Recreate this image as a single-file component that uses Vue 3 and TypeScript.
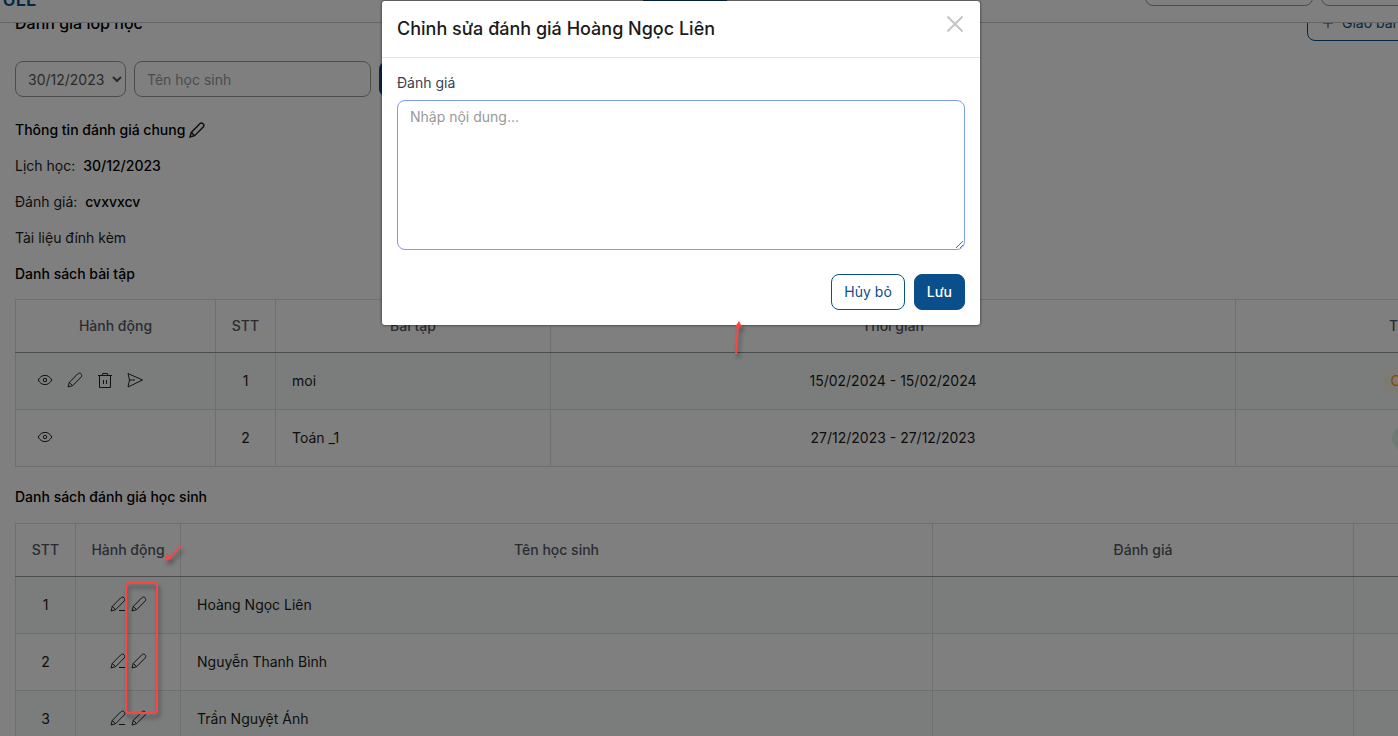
<script setup lang="ts">
import { ref } from 'vue'

interface Homework {
  id: number
  name: string
  time: string
  status: string
  tone: 'warn' | 'done'
  editable: boolean
}

interface Student {
  id: number
  name: string
}

const homeworks: Homework[] = [
  { id: 1, name: 'moi', time: '15/02/2024 - 15/02/2024', status: 'Chưa nộp', tone: 'warn', editable: true },
  { id: 2, name: 'Toán _1', time: '27/12/2023 - 27/12/2023', status: 'Đã nộp', tone: 'done', editable: false },
]

const students: Student[] = [
  { id: 1, name: 'Hoàng Ngọc Liên' },
  { id: 2, name: 'Nguyễn Thanh Bình' },
  { id: 3, name: 'Trần Nguyệt Ánh' },
]

const date = ref('30/12/2023')
const keyword = ref('')
const review = ref('')
</script>

<template>
  <div class="app">
    <svg class="defs" aria-hidden="true">
      <symbol id="i-eye" viewBox="0 0 16 16">
        <path d="M1.200 8C2.800 5 5.200 3.400 8 3.400S13.200 5 14.800 8C13.200 11 10.800 12.600 8 12.600S2.800 11 1.200 8Z" />
        <circle cx="8" cy="8" r="1.700" />
      </symbol>
      <symbol id="i-pencil" viewBox="0 0 16 16">
        <path d="M1 15L2.300 10.400L10.800 1.800C11.600 1 13 .8 14 1.700C15 2.600 15 4.100 14.200 5L5.600 13.700Z" />
        <path d="M2.300 10.400L5.600 13.700" />
      </symbol>
      <symbol id="i-edit" viewBox="0 0 16 16">
        <path d="M1 15L2.300 10.400L10.800 1.800C11.600 1 13 .8 14 1.700C15 2.600 15 4.100 14.200 5L5.600 13.700Z" />
        <path d="M2.300 10.400L5.600 13.700M9 14.500H15" />
      </symbol>
      <symbol id="i-trash" viewBox="0 0 16 16">
        <path d="M1 3.500H15M5 3.500L5.500 1.500H10.500L11 3.500M2.500 3.500V15.500H13.500V3.500M6.500 8V12M9.500 8V12" />
      </symbol>
      <symbol id="i-send" viewBox="0 0 16 16">
        <path d="M1 1.500L15.500 8L1 15L2.500 8ZM2.500 8H8" />
      </symbol>
    </svg>

    <header class="topbar">
      <strong class="brand">FULL</strong>
      <span class="nav-active"></span>
      <span class="top-field"></span>
      <span class="top-field"></span>
    </header>

    <main class="page">
      <div class="page-head">
        <h1>Đánh giá lớp học</h1>
        <button type="button" class="btn outline assign">
          <svg viewBox="0 0 10 10"><path d="M5 0V10M0 5H10" /></svg>Giao bài tập
        </button>
      </div>

      <form class="filters" @submit.prevent>
        <select v-model="date" aria-label="Lịch học">
          <option>30/12/2023</option>
        </select>
        <input v-model="keyword" type="text" placeholder="Tên học sinh" aria-label="Tên học sinh" />
        <button type="submit" class="btn primary search" aria-label="Tìm kiếm"></button>
      </form>

      <section class="info">
        <h2>
          Thông tin đánh giá chung
          <button type="button" class="icon-btn" aria-label="Sửa"><svg class="bold"><use href="#i-pencil" /></svg></button>
        </h2>
        <p>Lịch học: <b>30/12/2023</b></p>
        <p>Đánh giá: <b>cvxvxcv</b></p>
        <p>Tài liệu đính kèm</p>
        <h2>Danh sách bài tập</h2>
      </section>

      <table class="homework">
        <colgroup>
          <col class="c-actions" /><col class="c-no" /><col class="c-name" /><col class="c-time" /><col />
        </colgroup>
        <thead>
          <tr><th>Hành động</th><th>STT</th><th>Bài tập</th><th>Thời gian</th><th>Trạng thái</th></tr>
        </thead>
        <tbody>
          <tr v-for="h in homeworks" :key="h.id">
            <td>
              <div class="actions wide">
                <button type="button" class="icon-btn" aria-label="Xem"><svg><use href="#i-eye" /></svg></button>
                <template v-if="h.editable">
                  <button type="button" class="icon-btn" aria-label="Sửa"><svg><use href="#i-pencil" /></svg></button>
                  <button type="button" class="icon-btn" aria-label="Xóa"><svg><use href="#i-trash" /></svg></button>
                  <button type="button" class="icon-btn" aria-label="Gửi"><svg><use href="#i-send" /></svg></button>
                </template>
              </div>
            </td>
            <td class="center">{{ h.id }}</td>
            <td>{{ h.name }}</td>
            <td class="center">{{ h.time }}</td>
            <td class="center"><span class="pill" :class="h.tone">{{ h.status }}</span></td>
          </tr>
        </tbody>
      </table>

      <h2 class="list-title">Danh sách đánh giá học sinh</h2>

      <table class="students">
        <colgroup>
          <col class="c-no" /><col class="c-edit" /><col class="c-student" /><col class="c-review" /><col />
        </colgroup>
        <thead>
          <tr><th>STT</th><th>Hành động</th><th>Tên học sinh</th><th>Đánh giá</th><th></th></tr>
        </thead>
        <tbody>
          <tr v-for="s in students" :key="s.id">
            <td class="center">{{ s.id }}</td>
            <td>
              <div class="actions">
                <button type="button" class="icon-btn" aria-label="Đánh giá"><svg><use href="#i-edit" /></svg></button>
                <button type="button" class="icon-btn" aria-label="Sửa"><svg><use href="#i-pencil" /></svg></button>
              </div>
            </td>
            <td>{{ s.name }}</td>
            <td></td>
            <td></td>
          </tr>
        </tbody>
      </table>
    </main>

    <div class="backdrop">
      <form class="modal" role="dialog" aria-labelledby="modal-title" @submit.prevent>
        <div class="modal-head">
          <h3 id="modal-title">Chỉnh sửa đánh giá Hoàng Ngọc Liên</h3>
          <button type="button" class="close" aria-label="Đóng">
            <svg viewBox="0 0 16 16"><path d="M.5 .5L15.500 15.500M15.500 .5L.5 15.500" /></svg>
          </button>
        </div>
        <div class="modal-body">
          <label for="review">Đánh giá</label>
          <textarea id="review" v-model="review" placeholder="Nhập nội dung..."></textarea>
          <div class="modal-actions">
            <button type="button" class="btn outline">Hủy bỏ</button>
            <button type="submit" class="btn primary">Lưu</button>
          </div>
        </div>
      </form>
    </div>

    <div class="mark frame"></div>
    <svg class="mark arrow-down" viewBox="0 0 20 20">
      <path d="M18 3L7 14" /><path class="tip" d="M2 18L4 10.500L9 15.500Z" />
    </svg>
    <svg class="mark arrow-up" viewBox="0 0 12 36">
      <path d="M4 34L6 6" /><path class="tip" d="M7 1L10 7H3Z" />
    </svg>
  </div>
</template>

<style>
body {
  overflow: hidden;
}
</style>

<style scoped>
.app {
  position: relative;
  height: 100vh;
  overflow: hidden;
  background: #fff;
  color: #1b1b1b;
  font: 400 14px/20px Inter, "Liberation Sans", sans-serif;
}
.app * {
  box-sizing: border-box;
}
.defs {
  position: absolute;
  width: 0;
  height: 0;
}
button,
input,
select,
textarea {
  font: inherit;
}
h1, h2, h3, p {
  margin: 0;
}
svg {
  fill: none;
  stroke: currentColor;
  stroke-width: 1;
}

.topbar {
  display: flex;
  align-items: flex-end;
  justify-content: flex-end;
  gap: 8px;
  height: 23px;
  min-width: 1625px;
  overflow: hidden;
  padding: 0 136px 16px 0;
  border-bottom: 1px solid #c6c8cc;
}
.brand {
  margin: 0 auto 0 -8px;
  color: #0a4e8b;
  font-size: 18px;
  font-weight: 600;
  line-height: 12px;
}
.nav-active {
  width: 84px;
  height: 6px;
  margin: 0 410px 0 0;
  align-self: flex-start;
  border-top: 1px solid #0a4e8b;
}
.top-field {
  flex: none;
  width: 168px;
  height: 36px;
  border: 1px solid #999;
  border-radius: 8px;
}

.page {
  min-width: 1625px;
  overflow: hidden;
  padding: 0 15px;
}
.page-head {
  display: flex;
  align-items: flex-end;
  justify-content: space-between;
  height: 38px;
  margin-top: -20px;
}
h1 {
  padding-bottom: 6px;
  font-size: 16px;
  font-weight: 500;
  line-height: 24px;
}
.assign {
  display: flex;
  align-items: center;
  gap: 9px;
  width: 303px;
}
.assign svg {
  width: 10px;
  height: 10px;
  margin-left: 3px;
}
.filters {
  display: flex;
  gap: 8px;
  margin-top: 20px;
}
.filters select,
.filters input {
  height: 36px;
  border: 1px solid #999;
  border-radius: 8px;
  background: #fff;
  color: #555;
}
.filters select {
  width: 111px;
  padding: 0 0 0 8px;
}
.filters input {
  width: 237px;
  padding: 0 12px;
}
.search {
  width: 96px;
}
input::placeholder,
textarea::placeholder {
  color: #999;
  opacity: 1;
}
.info {
  display: flex;
  flex-direction: column;
  gap: 16px;
  margin: 23px 0 15px;
}
h2 {
  display: flex;
  align-items: center;
  gap: 4px;
  font-size: 14px;
  font-weight: 500;
  line-height: 20px;
}
b {
  margin-left: 4px;
  font-weight: 500;
}
h1, h2, b {
  color: #000;
}
.list-title {
  margin: 20px 0 16px;
}

.btn {
  height: 36px;
  padding: 0 12px;
  border: 1px solid #0a4e8b;
  border-radius: 8px;
}
.outline {
  background: #fff;
  color: #0a4e8b;
}
.primary {
  background: #0a4e8b;
  color: #fff;
  font-weight: 500;
}
.icon-btn {
  display: flex;
  padding: 0;
  border: 0;
  background: none;
  color: #222;
}
.icon-btn svg {
  width: 16px;
  height: 16px;
}
.icon-btn .bold {
  stroke-width: 1.500;
}

table {
  width: 100%;
  table-layout: fixed;
  border-collapse: collapse;
}
th,
td {
  height: 57px;
  padding: 0 16px;
  border: 1px solid #dcdee0;
  text-align: left;
}
th {
  height: 53px;
  padding: 0 12px;
  border-bottom-color: #96989c;
  color: #555966;
  font-weight: 500;
  text-align: center;
  white-space: nowrap;
}
tbody tr:nth-child(odd) {
  background: #f6fbf9;
}
.center {
  text-align: center;
}
.c-actions { width: 200px; }
.c-no { width: 60px; }
.c-name { width: 275px; }
.c-time { width: 685px; }
.c-edit { width: 105px; }
.c-student { width: 752px; }
.c-review { width: 421px; }
.actions {
  display: flex;
  justify-content: center;
  gap: 5px;
  padding-bottom: 2px;
}
.wide {
  justify-content: flex-start;
  gap: 14px;
  padding-left: 5px;
}
.pill {
  display: inline-block;
  padding: 3px 7px;
  border-radius: 13px;
}
.warn {
  background: #fdf4e8;
  color: #f59e0b;
}
.done {
  background: #e2f5ea;
  color: #16a34a;
}

.backdrop {
  position: absolute;
  inset: 0;
  display: flex;
  align-items: flex-start;
  justify-content: center;
  padding: 1px 36px 0 0;
  background: rgba(0, 0, 0, 0.5);
}
.modal {
  width: 100%;
  max-width: 598px;
  border-radius: 3px;
  background: #fff;
  box-shadow: 0 0 3px rgba(0, 0, 0, 0.7);
}
.modal-head {
  display: flex;
  align-items: center;
  justify-content: space-between;
  height: 57px;
  padding: 0 17px 0 15px;
  border-bottom: 1px solid #e3e4e5;
}
h3 {
  font-size: 18px;
  font-weight: 500;
  line-height: 24px;
}
.close {
  padding: 0 0 10px;
  border: 0;
  background: none;
  color: #c4c4c4;
}
.close svg {
  display: block;
  width: 16px;
  height: 16px;
  stroke-width: 2;
}
.modal-body {
  display: flex;
  flex-direction: column;
  padding: 15px;
}
.modal-body label {
  color: #374151;
}
textarea {
  height: 150px;
  margin: 7px 0 24px;
  padding: 6px 12px;
  border: 1px solid #7c9cf0;
  border-radius: 8px;
  outline: 0;
  resize: vertical;
}
.modal-actions {
  display: flex;
  justify-content: flex-end;
  gap: 9px;
}

.mark {
  position: absolute;
  filter: drop-shadow(2px 4px 2px rgba(0, 0, 0, 0.4));
  pointer-events: none;
}
.frame {
  left: 125px;
  top: 582px;
  width: 33px;
  height: 132px;
  border: 2px solid #fb4545;
  border-radius: 4px;
}
svg.mark {
  stroke: #fb4545;
  stroke-width: 2;
}
.mark .tip {
  fill: #fb4545;
  stroke: none;
}
.arrow-down {
  left: 163px;
  top: 543px;
  width: 20px;
  height: 20px;
}
.arrow-up {
  left: 732px;
  top: 320px;
  width: 12px;
  height: 36px;
}
</style>
